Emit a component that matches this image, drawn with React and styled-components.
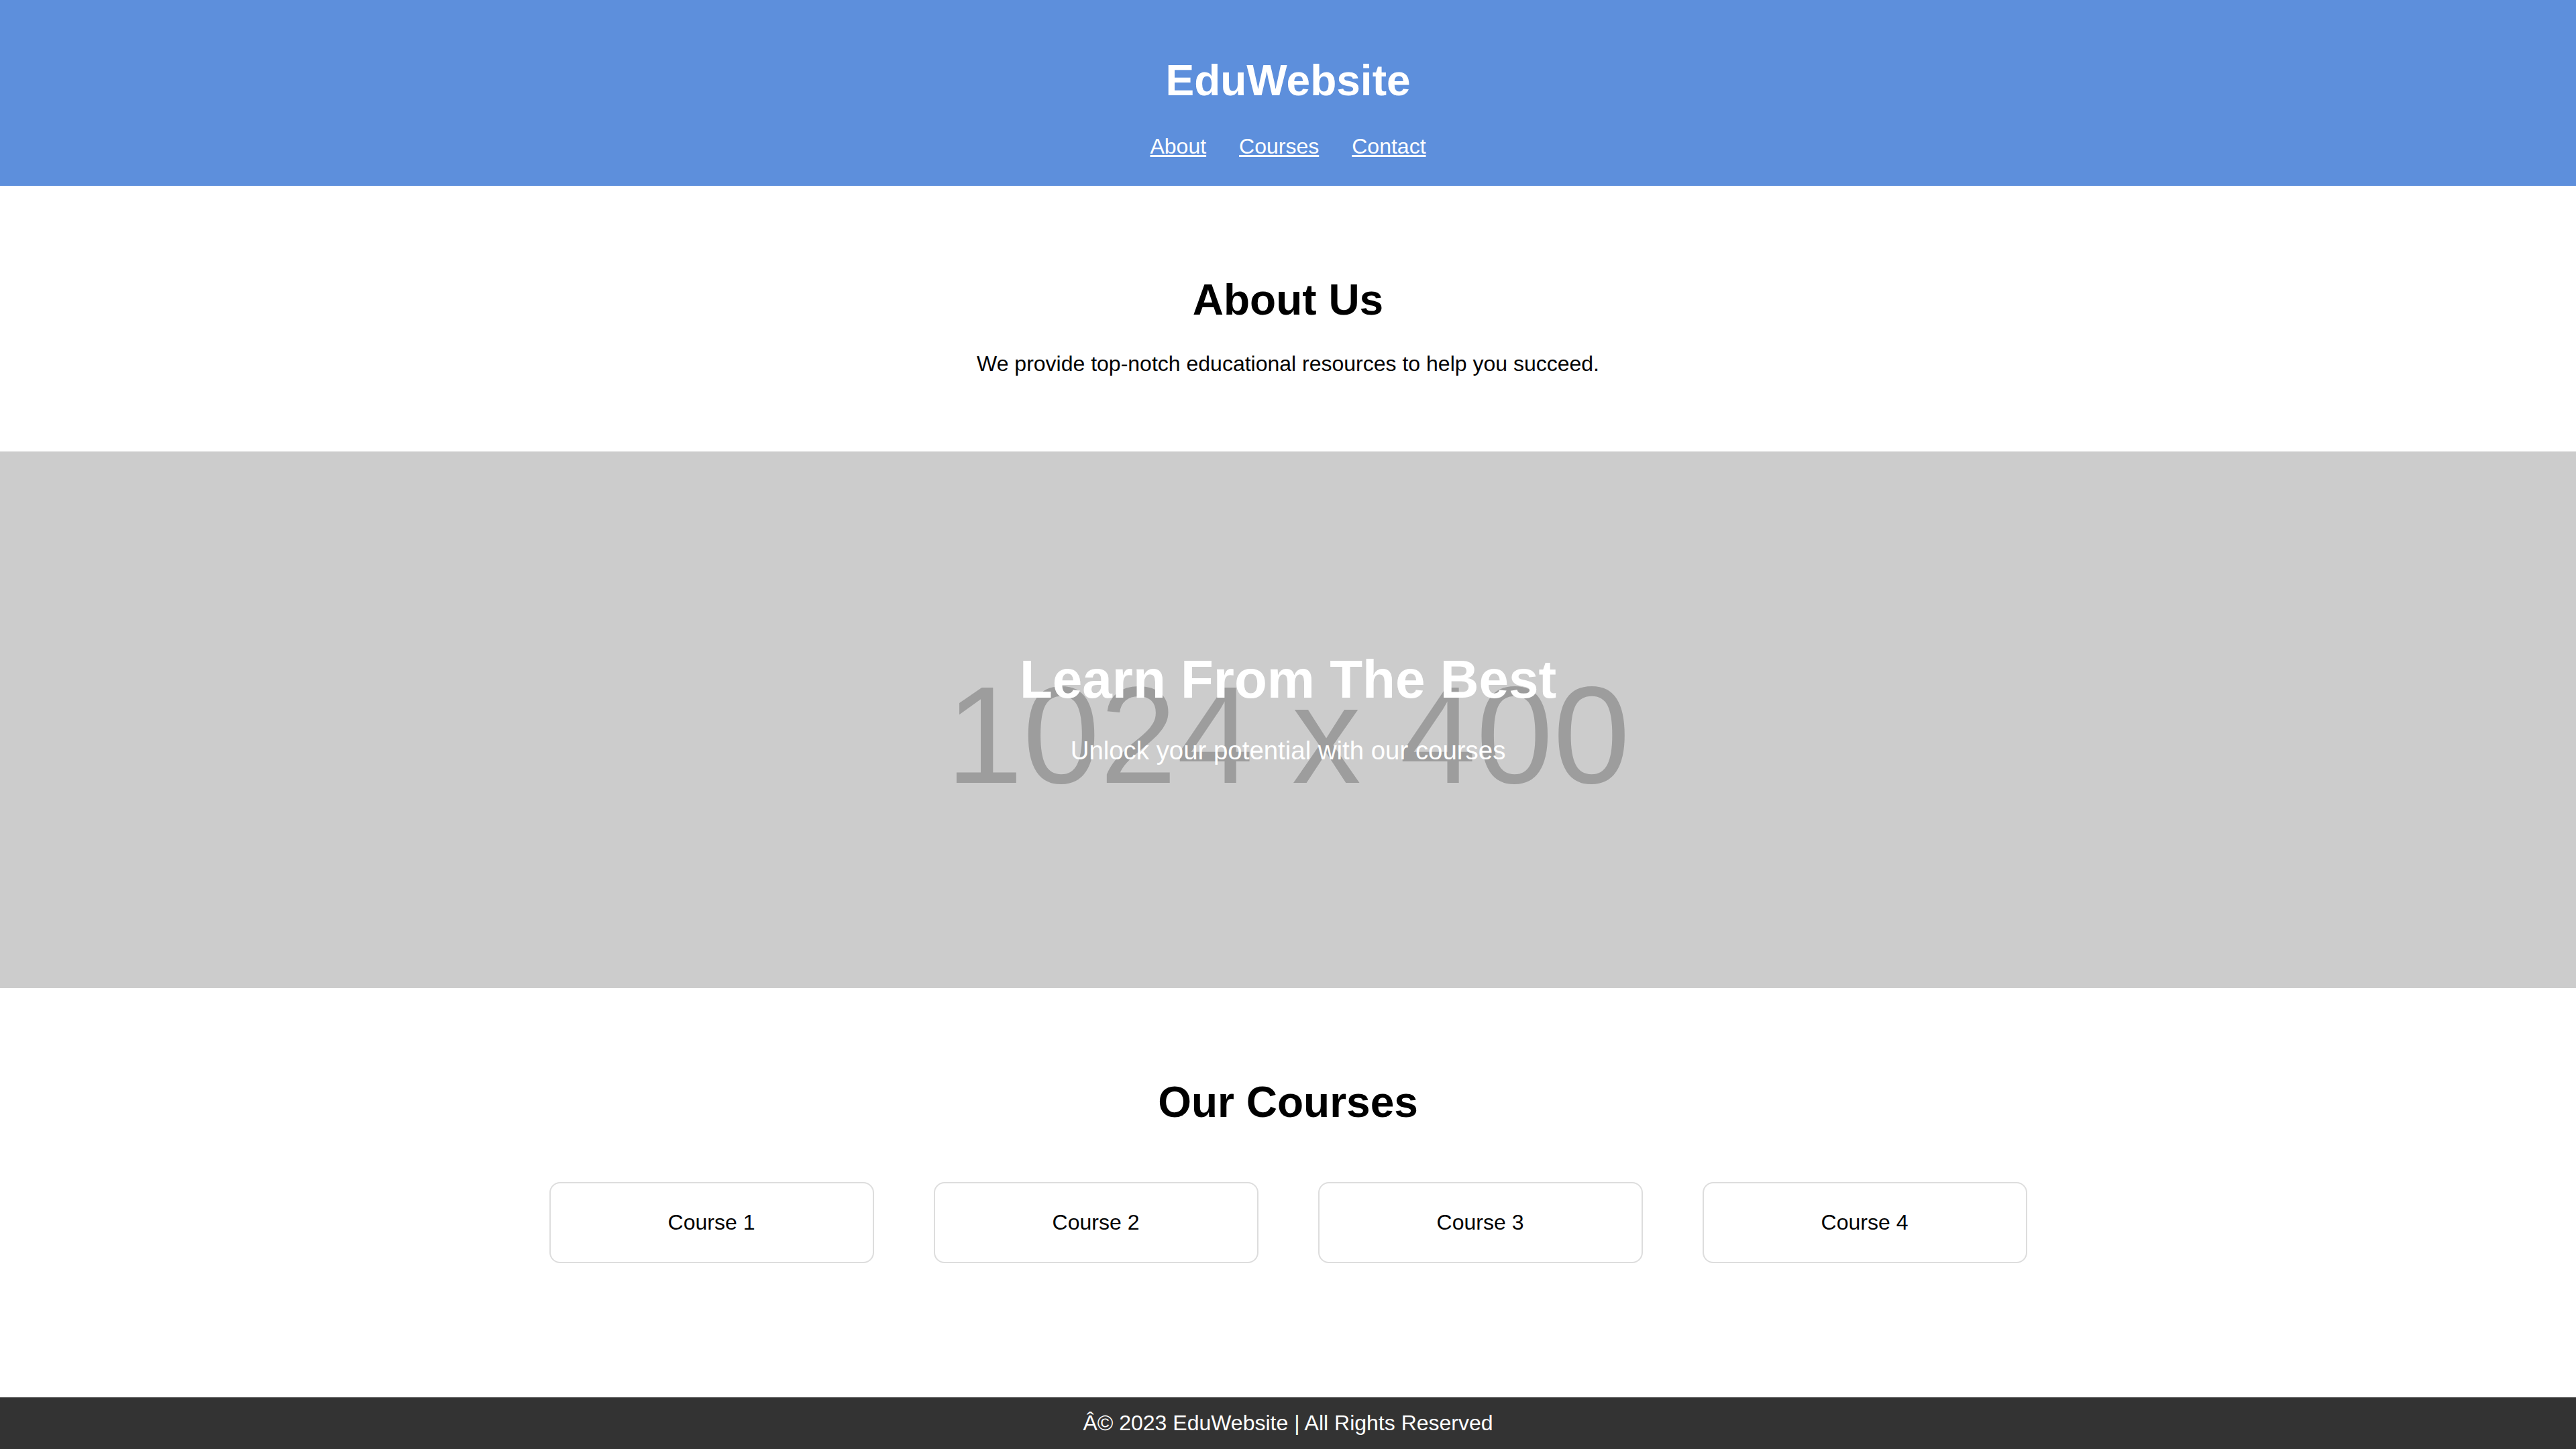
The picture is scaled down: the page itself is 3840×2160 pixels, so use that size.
import React from 'react'
import styled, { createGlobalStyle } from 'styled-components'

// page was captured at 2x, so every size below is the doubled css value

const GlobalStyle = createGlobalStyle`
  html, body {
    margin: 0;
    padding: 0;
  }
  body {
    font-family: "Liberation Sans", Arial, Helvetica, sans-serif;
    color: #000;
    background: #fff;
  }
`

const Page = styled.div`
  min-height: 100vh;
  display: flex;
  flex-direction: column;
`

const Header = styled.header`
  background: #5d8fdc;
  color: #fff;
  text-align: center;
  padding: 40px;
`

const Brand = styled.h1`
  margin: 43px 0;
  font-size: 64px;
  font-weight: 700;
`

const Nav = styled.nav`
  display: flex;
  justify-content: center;
  gap: 49px;
`

const NavLink = styled.a`
  color: #fff;
  font-size: 32px;
  text-decoration: underline;
`

const Section = styled.section`
  padding: 80px 40px;
  text-align: center;
`

const SectionTitle = styled.h2`
  margin: 53px 0 40px;
  font-size: 64px;
  font-weight: 700;
`

const Lead = styled.p`
  margin: 32px 0;
  font-size: 32px;
`

const Hero = styled.section`
  position: relative;
  height: 800px;
  overflow: hidden;
  background: #ccc;
  color: #fff;
  display: flex;
  flex-direction: column;
  align-items: center;
  justify-content: center;
  text-align: center;
`

// stand-in for the 1024x400 placeholder picture behind the banner text
const Placeholder = styled.div`
  position: absolute;
  inset: 0;
  display: flex;
  align-items: center;
  justify-content: center;
  padding-top: 46px;
  font-size: 206px;
  line-height: 1;
  color: #9d9d9d;
  white-space: nowrap;
  pointer-events: none;
`

const HeroTitle = styled.h2`
  position: relative;
  margin: 0;
  font-size: 80px;
  font-weight: 700;
`

const HeroText = styled.p`
  position: relative;
  margin: 38px 0;
  font-size: 38.4px;
`

const CourseRow = styled.div`
  display: flex;
  justify-content: center;
  gap: 89px;
  padding: 42px 0 40px;
`

const Card = styled.div`
  width: 400px;
  padding: 40px;
  border: 2px solid #ddd;
  border-radius: 16px;
  background: #fff;
  font-size: 32px;
`

const Footer = styled.footer`
  margin-top: auto;
  background: #333;
  color: #fff;
  text-align: center;
  padding: 20px;
  font-size: 32px;
`

const courses = ['Course 1', 'Course 2', 'Course 3', 'Course 4']

export default function App() {
  return (
    <Page>
      <GlobalStyle />
      <Header>
        <Brand>EduWebsite</Brand>
        <Nav>
          <NavLink href="#about">About</NavLink>
          <NavLink href="#courses">Courses</NavLink>
          <NavLink href="#contact">Contact</NavLink>
        </Nav>
      </Header>

      <Section id="about">
        <SectionTitle>About Us</SectionTitle>
        <Lead>We provide top-notch educational resources to help you succeed.</Lead>
      </Section>

      <Hero>
        <Placeholder>1024 x 400</Placeholder>
        <HeroTitle>Learn From The Best</HeroTitle>
        <HeroText>Unlock your potential with our courses</HeroText>
      </Hero>

      <Section id="courses">
        <SectionTitle>Our Courses</SectionTitle>
        <CourseRow>
          {courses.map((name) => (
            <Card key={name}>{name}</Card>
          ))}
        </CourseRow>
      </Section>

      <Footer id="contact">{'\u00C2\u00A9 2023 EduWebsite | All Rights Reserved'}</Footer>
    </Page>
  )
}
